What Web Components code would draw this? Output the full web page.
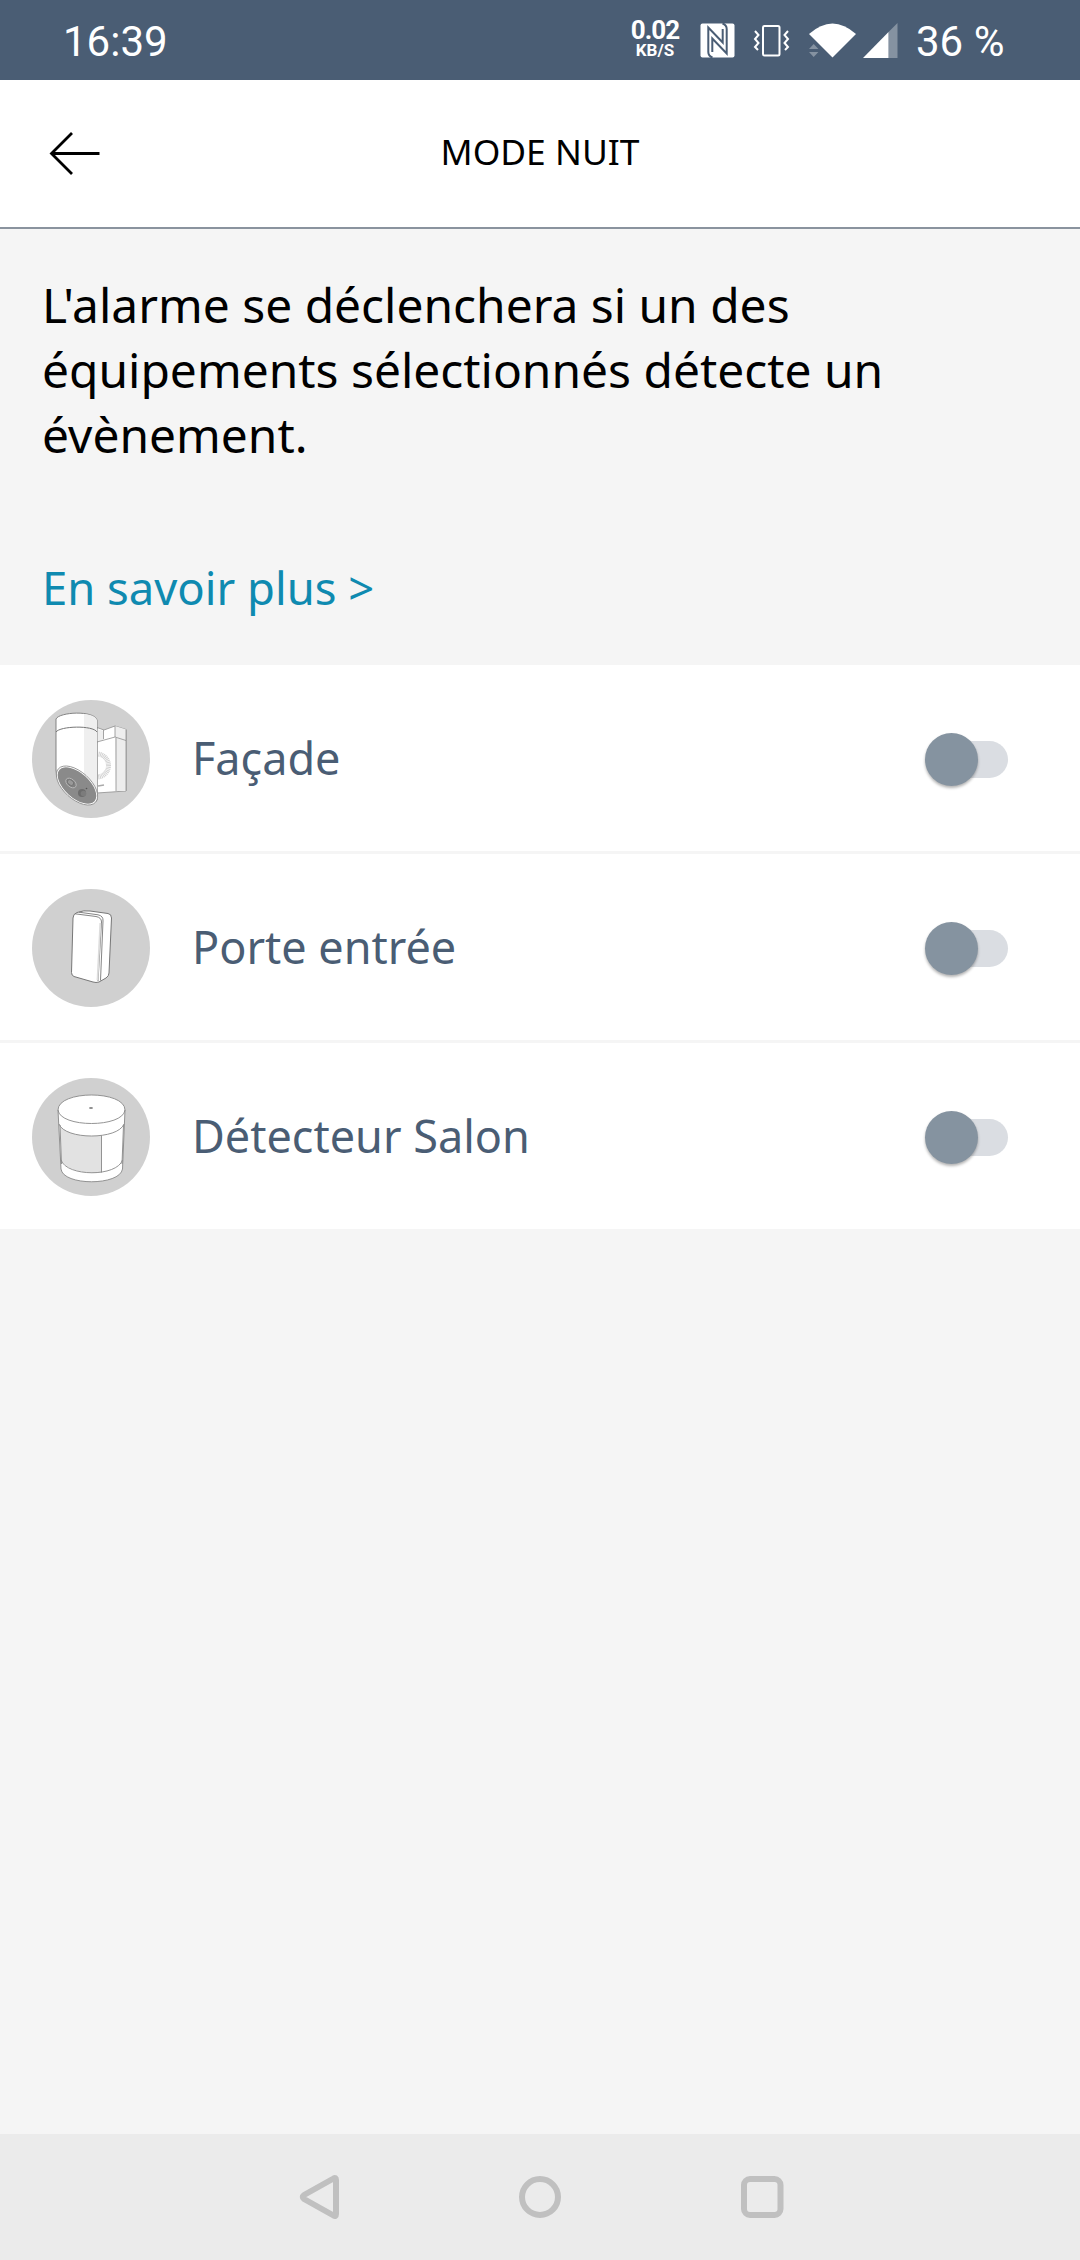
<!DOCTYPE html>
<html lang="fr">
<head>
<meta charset="utf-8">
<title>Mode nuit</title>
<style>
html,body{margin:0;padding:0;background:#f5f5f5}
body{width:1080px;height:2260px;overflow:hidden;font-family:"Noto Sans",sans-serif}
</style>
</head>
<body>
<night-mode-app></night-mode-app>
<script>
function define(name, html){
  const t=document.createElement('template');
  t.innerHTML=html;
  customElements.define(name, class extends HTMLElement{
    constructor(){super();this.attachShadow({mode:'open'}).append(t.content.cloneNode(true));}
  });
}

define('status-bar', `
<style>
:host{display:flex;height:80px;background:#4a5d74;color:#fff;font:42px/50px Roboto,sans-serif;box-sizing:border-box;padding:17px 74px 0 63px;align-items:flex-start}
.time{flex:1}
.speed{display:flex;flex-direction:column;align-items:center;width:50px;font-weight:700;font-size:26px;line-height:26px;letter-spacing:-.9px;margin-right:20px}
.speed small{font-size:17px;line-height:15px;letter-spacing:0}
svg{display:block;margin-top:-17px}
.battery{width:90px;margin-left:16px;white-space:nowrap}
</style>
<span class="time">16:39</span>
<span class="speed"><span>0.02</span><small>KB/S</small></span>
<svg width="200" height="80" viewBox="700 0 200 80" fill="#fff">
 <rect x="700.5" y="23.5" width="34" height="34" rx="2"/>
 <path fill="none" stroke="#4a5d74" stroke-width="2" d="M712.500 57.500Q708.300 56 708.300 52V27.500L722.700 42.500V29M722.500 23.500Q726.700 25 726.700 29V53.500L712.300 38.500V52"/>
 <g fill="none" stroke="#fff" stroke-width="2"><rect x="763" y="26" width="16.500" height="29.500" rx="1.500"/><path d="M755 31l3.500 4-3.500 4 3.500 4-3.500 4 3 3M788 31l-3.500 4 3.500 4-3.500 4 3.500 4-3 3"/></g>
 <path d="M809 34Q832.500 13 856 34L832.500 57.500Z"/>
 <path opacity=".33" d="M809 49l4.700-5 4.700 5zM809 52h9.400l-4.700 5z"/>
 <path d="M863 58L888.500 32V58Z"/><path opacity=".33" d="M888.500 32L897.500 23V58H888.500Z"/>
</svg>
<span class="battery">36 %</span>`);

define('page-header', `
<style>
:host{display:grid;grid-template-columns:150px 1fr 150px;height:149px;box-sizing:border-box;background:#fff;border-bottom:2px solid #8a939e;align-items:center}
h1{margin:0 0 6px;text-align:center;font-weight:400;font-size:35.4px;line-height:50px;color:#000}
svg{display:block}
</style>
<svg width="150" height="147" viewBox="0 80 150 147" fill="none" stroke="#000" stroke-width="2.800"><path d="M99.500 153.500H51.500M72 133L51.500 153.500L72 174"/></svg>
<h1><slot></slot></h1>`);

define('info-panel', `
<style>
:host{display:flex;flex-direction:column;align-items:flex-start;height:436px;box-sizing:border-box;padding:43px 42px 0}
p{margin:0;width:900px;font-size:47.9px;line-height:65px;color:#000}
a{margin-top:90px;font-size:45.4px;line-height:60px;color:#0f8ab0;text-decoration:none}
</style>
<p><slot></slot></p><a><slot name="link"></slot></a>`);

define('toggle-switch', `
<style>
:host{display:flex;align-items:center;width:77px;height:37px;border-radius:19px;background:#dadde2}
i{flex:none;width:53px;height:53px;margin-left:-6px;border-radius:50%;background:#8593a0;box-shadow:0 2px 3px rgba(0,0,0,.3)}
</style><i></i>`);

define('device-row', `
<style>
:host{display:flex;align-items:center;height:186px;box-sizing:border-box;padding:0 72px 0 32px;background:#fff;color:#4a5d74}
.pic{flex:none;width:118px;height:118px;margin-top:2px}
.label{flex:1;margin-left:42px;font-size:45px;line-height:62px}
toggle-switch{margin-top:2px}
</style>
<span class="pic"><slot name="icon"></slot></span>
<span class="label"><slot></slot></span>
<toggle-switch></toggle-switch>`);

const art={
camera:`
<path d="M65 27.500L72 30 83 26 94 29.500V91L65 93Z" fill="#fff" stroke="#8e8e8e" stroke-width=".8"/>
<path d="M83 37L94 40.500V91L84 91Z" fill="#ededed"/>
<path d="M65 29L71.500 31V40L65 42Z" fill="#eee"/>
<path d="M83 26L94 29.500V40.500L83 37Z" fill="#eee"/>
<path d="M65 42L83 37 94 40.500M84 38V91M71.500 30V39M83 26V37M94 29.500V91" fill="none" stroke="#8e8e8e" stroke-width=".8"/>
<path d="M65 54a11 11 0 0 1 0 23" fill="none" stroke="#d2d2d2" stroke-width="5" stroke-dasharray="1 .6"/>
<path d="M66 86l6-1" stroke="#aaa" stroke-width="1.500"/>
<path d="M24 19C27 12 62 10 65 20V100C61 107 51 104 44 99C35 93 24 84 24 70Z" fill="#fff" stroke="#777" stroke-width=".9"/>
<path d="M52 14Q63 15 65 20V98L52 82Z" fill="#efefef"/>
<path d="M24 32C28 26 61 25 65 32" fill="none" stroke="#777" stroke-width="1"/>
<ellipse cx="45" cy="85.500" rx="25" ry="13.500" transform="rotate(42 45 85.500)" fill="#fff" stroke="#888" stroke-width=".8"/>
<ellipse cx="45" cy="85.500" rx="23.500" ry="12.300" transform="rotate(42 45 85.500)" fill="#8a8a8a"/>
<ellipse cx="39" cy="83" rx="6" ry="3.800" transform="rotate(40 39 83)" fill="#808080" stroke="#b8b8b8" stroke-width=".9"/>
<ellipse cx="38.500" cy="82.500" rx="3.500" ry="2.500" transform="rotate(40 38.500 82.500)" fill="#999" stroke="#666" stroke-width=".6"/>
<circle cx="50" cy="93" r="4" fill="#6c6c6c"/><circle cx="51.500" cy="93.500" r="2.800" fill="#7c7c7c"/><circle cx="54.500" cy="88.500" r=".8" fill="#555"/>`,
door:`
<path d="M45 23.500Q52 21 58 22L76 24.500Q79.500 25 79.500 29L77 84Q77 87 74 89L67 93Q64 94 61 93L42 87.500Q39.500 86.500 39.500 83.500L41 29Q41 25 45 23.500Z" fill="#fff" stroke="#777" stroke-width="1"/>
<path d="M43 24.800L64 27.500Q69.500 28.500 69.500 33L66 92M47 23.200L66 25.800Q71.500 27 71 32L68.500 91.500" fill="none" stroke="#777" stroke-width=".9"/>
<path d="M68.300 34L65.500 91" stroke="#ddd" stroke-width="1.800"/>`,
motion:`
<path d="M26 32C26 12 93 12 93 32L90.500 91C88 108 31 108 29 91Z" fill="#fff" stroke="#888" stroke-width=".9"/>
<path d="M28 49Q42 60 69.500 57.500V94.500Q43 97 29.500 84Z" fill="#e2e2e2"/>
<path d="M26 32C28 50 91 50 93 32M27 46C33 62 86 62 92 46M29 82C35 99 85 99 90.500 82M69.500 57.500V94.500M28 47L29.500 86M91.500 47L90 86" fill="none" stroke="#888" stroke-width=".9"/>
<ellipse cx="59" cy="30" rx="2" ry="1.100" fill="#888"/>`
};
for(const [k,v] of Object.entries(art)) define('device-'+k, `
<style>:host{display:block;width:118px;height:118px}svg{display:block}</style>
<svg width="118" height="118" viewBox="0 0 118 118" stroke-linejoin="round"><circle cx="59" cy="59" r="59" fill="#d0d0d0"/>${v}</svg>`);

define('nav-bar', `
<style>
:host{display:grid;grid-template-columns:repeat(3,222px);justify-content:center;height:126px;background:#ebebeb}
svg{display:block;width:222px;height:126px;fill:none;stroke:#c0c0c0;stroke-width:6;stroke-linejoin:round}
</style>
<svg viewBox="207 2134 222 126"><path d="M333.500 2178.500Q336 2177 336 2180V2214Q336 2217 333.500 2215.500L304 2199Q301.500 2197 304 2195Z"/></svg>
<svg viewBox="429 2134 222 126"><circle cx="540" cy="2197" r="18"/></svg>
<svg viewBox="651 2134 222 126"><rect x="744" y="2179" width="36.500" height="36" rx="6"/></svg>`);

define('night-mode-app', `
<style>
:host{display:flex;flex-direction:column;width:1080px;height:2260px;background:#f5f5f5;font-family:"Noto Sans",sans-serif}
main{flex:1;display:flex;flex-direction:column}
.list{display:flex;flex-direction:column;gap:3px}
</style>
<status-bar></status-bar>
<page-header>MODE NUIT</page-header>
<main>
<info-panel>L'alarme se déclenchera si un des équipements sélectionnés détecte un évènement.<span slot="link">En savoir plus &gt;</span></info-panel>
<div class="list">
<device-row><device-camera slot="icon"></device-camera>Façade</device-row>
<device-row><device-door slot="icon"></device-door>Porte entrée</device-row>
<device-row><device-motion slot="icon"></device-motion>Détecteur Salon</device-row>
</div>
</main>
<nav-bar></nav-bar>`);
</script>
</body>
</html>
